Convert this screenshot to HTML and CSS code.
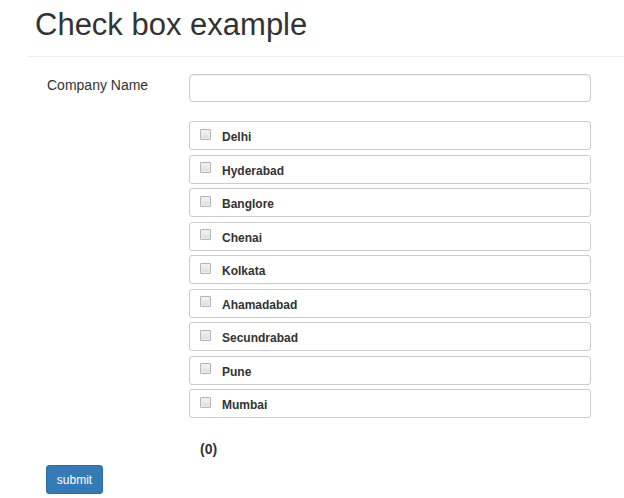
FILE: index.html
```html
<!DOCTYPE html>
<html lang="en">
<head>
    <meta charset="UTF-8">
    <title>Check box example</title>
    <link rel="stylesheet" href="styles.css">
</head>
<body>
    <h1 class="title">Check box example</h1>
    <div class="rule"></div>
    <form class="form">
        <div class="row">
            <label class="label">Company Name</label>
            <input class="text-input" type="text">
        </div>
        <div class="list">
            <label class="item"><input type="checkbox"><span>Delhi</span></label>
            <label class="item"><input type="checkbox"><span>Hyderabad</span></label>
            <label class="item"><input type="checkbox"><span>Banglore</span></label>
            <label class="item"><input type="checkbox"><span>Chenai</span></label>
            <label class="item"><input type="checkbox"><span>Kolkata</span></label>
            <label class="item"><input type="checkbox"><span>Ahamadabad</span></label>
            <label class="item"><input type="checkbox"><span>Secundrabad</span></label>
            <label class="item"><input type="checkbox"><span>Pune</span></label>
            <label class="item"><input type="checkbox"><span>Mumbai</span></label>
        </div>
        <p class="count">(0)</p>
        <button class="submit" type="button">submit</button>
    </form>
</body>
</html>
```

FILE: styles.css
```css
body{
    margin: 0;
    font-family: "Liberation Sans", Arial, sans-serif;
    color: #333;
    background-color: white;
}
.title{
    margin: 0;
    padding: 6px 0 0 35px;
    font-size: 31px;
    font-weight: normal;
    line-height: 38px;
}
.rule{
    margin: 12px 0 0 27px;
    border-top: 1px solid #eee;
}
.form{
    padding: 17px 0 0 46px;
}
.row{
    display: flex;
    align-items: center;
}
.label{
    width: 142px;
    font-size: 14px;
    margin-top: -6px;
    padding-left: 1px;
}
.text-input{
    box-sizing: border-box;
    width: 402px;
    height: 28px;
    margin: 0;
    border: 1px solid #ccc;
    border-radius: 4px;
    box-shadow: inset 0 1px 1px rgba(0,0,0,.075);
}
.list{
    display: flex;
    flex-direction: column;
    gap: 4.5px;
    margin: 19px 0 0 143px;
    width: 402px;
}
.item{
    box-sizing: border-box;
    display: flex;
    align-items: center;
    height: 29px;
    border: 1px solid #ccc;
    border-radius: 3px;
    font-size: 12px;
    font-weight: bold;
}
.item span{
    margin-top: 3px;
}
.item input{
    appearance: none;
    -webkit-appearance: none;
    box-sizing: border-box;
    width: 11px;
    height: 11px;
    margin: -3px 11px 0 10px;
    border: 1px solid #b5b5b5;
    border-radius: 1px;
    background: linear-gradient(#f4f4f4, #dcdcdc);
    box-shadow: inset 0 0 0 1px #eee;
}
.count{
    margin: 23px 0 0 154px;
    font-size: 14px;
    font-weight: bold;
    line-height: 16px;
}
.submit{
    display: block;
    margin-top: 8px;
    width: 57px;
    height: 29px;
    padding: 0;
    background-color: #337ab7;
    border: 1px solid #2e6da4;
    border-radius: 3px;
    color: white;
    font-family: "Liberation Sans", Arial, sans-serif;
    font-size: 12px;
}
```
